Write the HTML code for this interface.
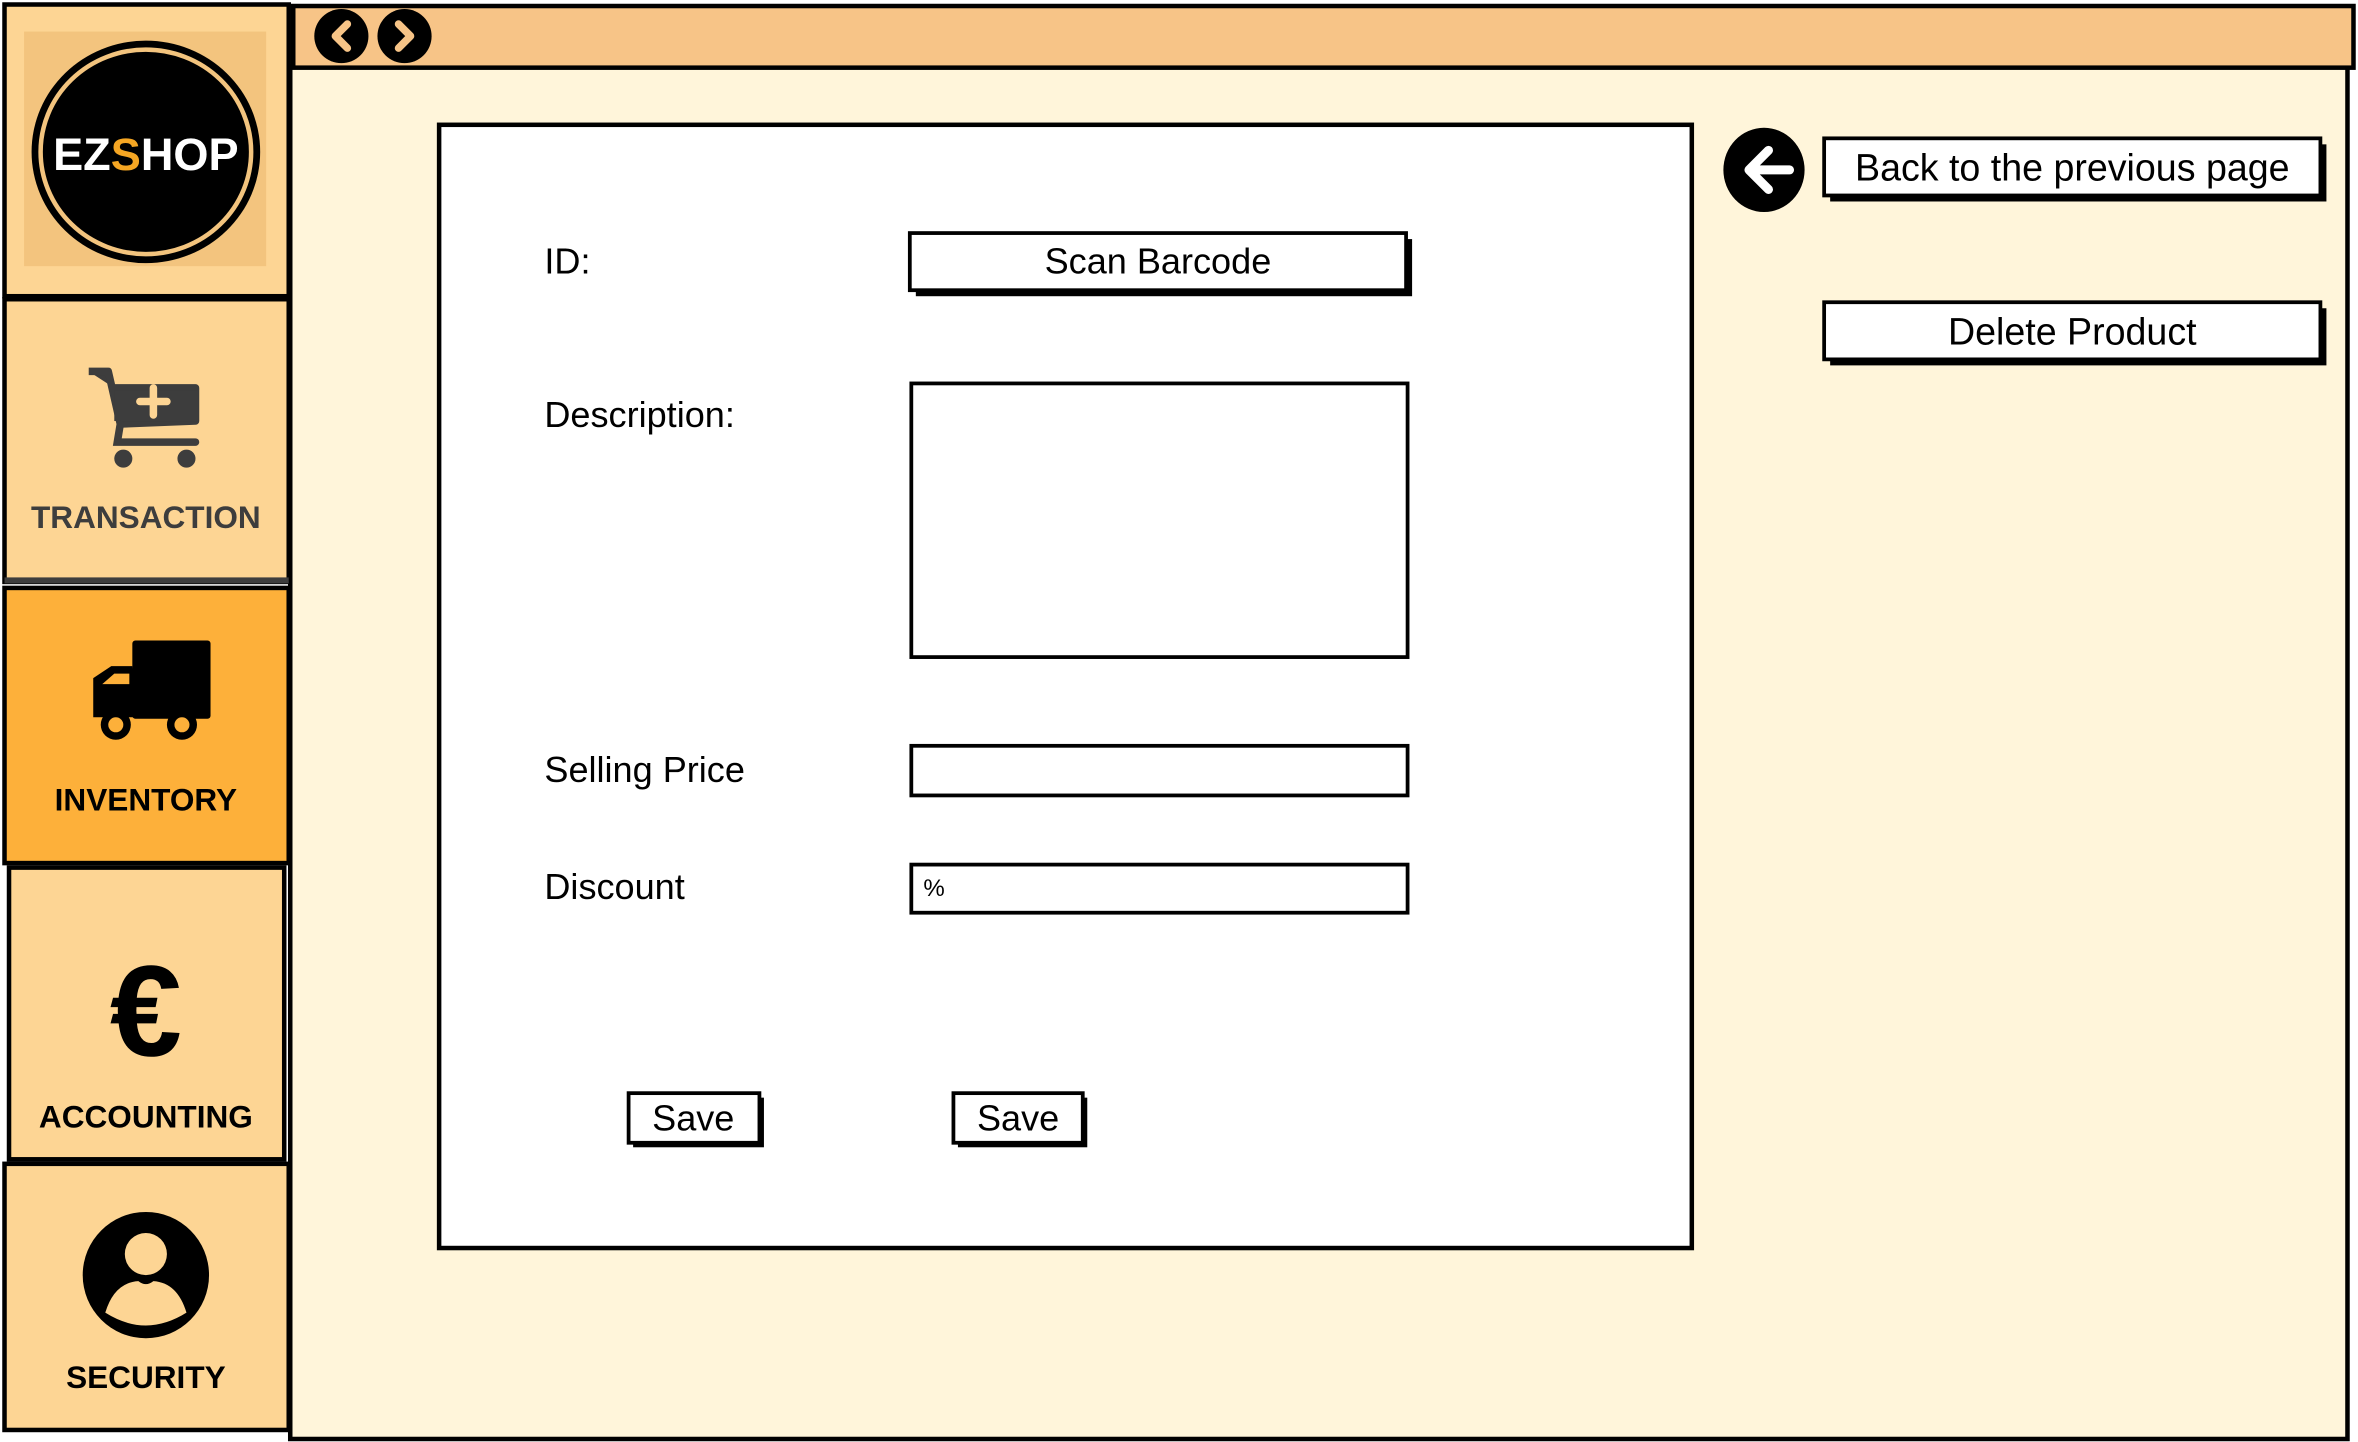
<!DOCTYPE html>
<html><head><meta charset="utf-8"><style>
html,body{margin:0;padding:0;background:#fff;overflow:hidden}
svg{display:block}
text{font-family:"Liberation Sans",sans-serif}
</style></head><body>
<svg width="2358" height="1442" viewBox="0 0 1568 959" preserveAspectRatio="none" xmlns="http://www.w3.org/2000/svg">
<rect x="0" y="0" width="1568" height="959" fill="#fff"/>
<rect x="193" y="44" width="1368" height="913" fill="#FFF5DA" stroke="#000" stroke-width="3"/>
<rect x="195" y="4" width="1370" height="41" fill="#F7C487" stroke="#000" stroke-width="3"/>
<circle cx="227" cy="24" r="18" fill="#000"/>
<path d="M231 16 L223 24 L231 32" fill="none" stroke="#F7C487" stroke-width="5" stroke-linecap="round" stroke-linejoin="round"/>
<circle cx="269" cy="24" r="18" fill="#000"/>
<path d="M265 16 L273 24 L265 32" fill="none" stroke="#F7C487" stroke-width="5" stroke-linecap="round" stroke-linejoin="round"/>
<rect x="3" y="3" width="189" height="194" fill="#FDD594" stroke="#000" stroke-width="3"/>
<rect x="16" y="21" width="161" height="156" fill="#F3C47E"/>
<ellipse cx="97" cy="101" rx="76" ry="74" fill="#000"/>
<ellipse cx="97" cy="101" rx="70" ry="68" fill="none" stroke="#F3C47E" stroke-width="3"/>
<text x="97" y="113" text-anchor="middle" font-size="30" font-weight="bold" fill="#fff" letter-spacing="0">EZ<tspan fill="#F5A623">S</tspan>HOP</text>
<rect x="3" y="199" width="189" height="188" fill="#FDD594" stroke="#000" stroke-width="3"/>
<path d="M59 247 L72 247 L80 282 L130 280 L130 258 L76 258" fill="#3d3d3d" stroke="#3d3d3d" stroke-width="5" stroke-linejoin="round"/>
<rect x="76" y="260" width="56" height="20" fill="#3d3d3d"/>
<path d="M93 267 H111 M102 258 V276" stroke="#FDD594" stroke-width="5" stroke-linecap="round"/>
<path d="M80 282 L78 294 L130 294" fill="none" stroke="#3d3d3d" stroke-width="5" stroke-linecap="round"/>
<circle cx="82" cy="305" r="6" fill="#3d3d3d"/><circle cx="124" cy="305" r="6" fill="#3d3d3d"/>
<text x="97" y="351" text-anchor="middle" font-size="21" font-weight="bold" fill="#3d3d3d">TRANSACTION</text>
<rect x="3" y="384" width="189" height="4" fill="#3d3d3d"/>
<rect x="3" y="391" width="189" height="183" fill="#FDB03A" stroke="#000" stroke-width="3"/>
<rect x="88" y="426" width="52" height="52" rx="2" fill="#000"/>
<path d="M88 443 H74 L62 451 V477 H90 Z" fill="#000"/>
<path d="M86 448 H76 L68 455 H86 Z" fill="#FDB03A"/>
<circle cx="77" cy="482" r="10" fill="#000"/><circle cx="77" cy="482" r="5" fill="#FDB03A"/>
<circle cx="121" cy="482" r="10" fill="#000"/><circle cx="121" cy="482" r="5" fill="#FDB03A"/>
<text x="97" y="539" text-anchor="middle" font-size="21" font-weight="bold" fill="#000">INVENTORY</text>
<rect x="6" y="577" width="183" height="194" fill="#FDD594" stroke="#000" stroke-width="3"/>
<text x="97" y="702" text-anchor="middle" font-size="86" font-weight="bold" fill="#000">€</text>
<text x="97" y="750" text-anchor="middle" font-size="21" font-weight="bold" fill="#000">ACCOUNTING</text>
<rect x="3" y="774" width="189" height="177" fill="#FDD594" stroke="#000" stroke-width="3"/>
<circle cx="97" cy="848" r="42" fill="#000"/>
<circle cx="97" cy="834" r="14" fill="#FDD594"/>
<path d="M70 873 Q76 853 92 852 Q97 856 102 852 Q118 853 124 873 Q97 890 70 873 Z" fill="#FDD594"/>
<text x="97" y="923" text-anchor="middle" font-size="21" font-weight="bold" fill="#000">SECURITY</text>
<rect x="292" y="83" width="833" height="747" fill="#fff" stroke="#000" stroke-width="3"/>
<g font-size="24" fill="#000">
<text x="362" y="182">ID:</text>
<text x="362" y="284">Description:</text>
<text x="362" y="520">Selling Price</text>
<text x="362" y="598">Discount</text>
</g>
<rect x="609" y="159" width="330" height="38" fill="#000"/>
<rect x="605" y="155" width="330" height="38" fill="#fff" stroke="#000" stroke-width="2.5"/>
<text x="770" y="182" text-anchor="middle" font-size="24">Scan Barcode</text>
<rect x="606" y="255" width="330" height="182" fill="#fff" stroke="#000" stroke-width="2.5"/>
<rect x="606" y="496" width="330" height="33" fill="#fff" stroke="#000" stroke-width="2.5"/>
<rect x="606" y="575" width="330" height="32" fill="#fff" stroke="#000" stroke-width="2.5"/>
<text x="614" y="596" font-size="16">%</text>
<rect x="421" y="730" width="87" height="33" fill="#000"/>
<rect x="418" y="727" width="87" height="33" fill="#fff" stroke="#000" stroke-width="2.5"/>
<text x="461" y="752" text-anchor="middle" font-size="24">Save</text>
<rect x="637" y="730" width="86" height="33" fill="#000"/>
<rect x="634" y="727" width="86" height="33" fill="#fff" stroke="#000" stroke-width="2.5"/>
<text x="677" y="752" text-anchor="middle" font-size="24">Save</text>
<ellipse cx="1173" cy="113" rx="27" ry="28" fill="#000"/>
<path d="M1176 100 L1163 113 L1176 126 M1163 113 H1190" fill="none" stroke="#fff" stroke-width="6" stroke-linecap="round" stroke-linejoin="round"/>
<rect x="1217" y="96" width="330" height="38" fill="#000"/>
<rect x="1213" y="92" width="330" height="38" fill="#fff" stroke="#000" stroke-width="2.5"/>
<text x="1378" y="120" text-anchor="middle" font-size="25">Back to the previous page</text>
<rect x="1217" y="205" width="330" height="38" fill="#000"/>
<rect x="1213" y="201" width="330" height="38" fill="#fff" stroke="#000" stroke-width="2.5"/>
<text x="1378" y="229" text-anchor="middle" font-size="25">Delete Product</text>
</svg>
</body></html>
